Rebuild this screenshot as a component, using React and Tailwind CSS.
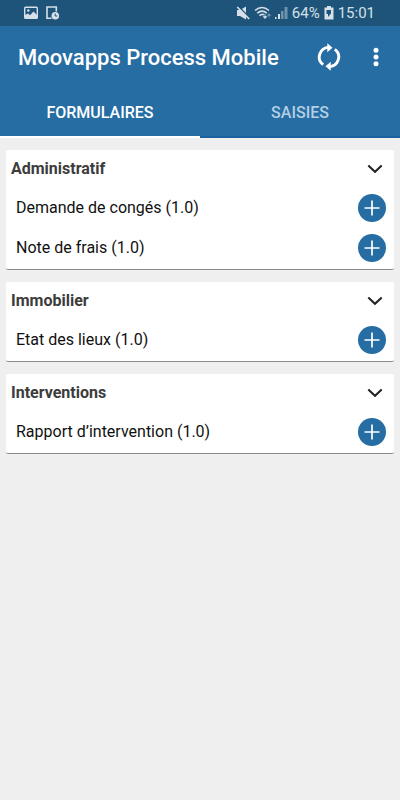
import {useState} from "react";

const groups = [
    {name: "Administratif", forms: ["Demande de congés (1.0)", "Note de frais (1.0)"]},
    {name: "Immobilier", forms: ["Etat des lieux (1.0)"]},
    {name: "Interventions", forms: ["Rapport d’intervention (1.0)"]},
];

function StatusBar() {
    return (
        <div className="flex h-[26px] items-center justify-between bg-[#1e547a] pl-6 pr-[25px] text-[#d5e0e8]">
            <div className="flex items-center gap-2">
                <svg width="14" height="14" viewBox="0 0 14 14">
                    <rect x="0.7" y="1.2" width="12.6" height="11.2" rx="0.8" fill="none" stroke="currentColor" strokeWidth="1.4"/>
                    <circle cx="4.3" cy="4.5" r="1.2" fill="currentColor"/>
                    <path d="M1 12V9l3-1.5 2 1.8L9.5 5.5 13 9v3z" fill="currentColor"/>
                </svg>
                <svg width="14" height="14" viewBox="0 0 14 14">
                    <path d="M5.5 12.3H1V1h9.3v4.5" fill="none" stroke="currentColor" strokeWidth="1.6"/>
                    <circle cx="9.3" cy="9.8" r="3.8" fill="currentColor"/>
                    <path d="M9.2 7.6V10h2.2" fill="none" stroke="#1e547a" strokeWidth="1"/>
                </svg>
            </div>
            <div className="flex items-center gap-1">
                <svg width="14" height="14" viewBox="0 0 14 14">
                    <path d="M1 4h3L10 0.5v13L4 10H1z" fill="currentColor"/>
                    <path d="M2.6 0.4l11 11.6" stroke="#1e547a" strokeWidth="1.5"/>
                    <path d="M1.2 1l12 12" stroke="currentColor" strokeWidth="1.7"/>
                </svg>
                <div className="flex items-center gap-0.5">
                    <svg width="18" height="14" viewBox="0 0 18 14">
                        <path d="M1 4.5Q8 -1.5 15 4.5M3.2 7.2Q8 3 12.8 7.2M5.4 9.7Q8 7.4 10 9" fill="none" stroke="currentColor" strokeWidth="1.6"/>
                        <path d="M11 8v4M9.3 10.6L11 12.6l1.7-2z" fill="currentColor" stroke="currentColor" strokeWidth="0.8"/>
                        <path d="M13.4 9.4L15 7.5l1.6 1.9zM15 9v2.5" fill="currentColor" stroke="currentColor" strokeWidth="0.8" opacity="0.45"/>
                    </svg>
                    <svg width="14" height="14" viewBox="0 0 14 14" fill="currentColor">
                        <path d="M1 11h1.5v2H1zM4 8h2v5H4z"/>
                        <path d="M7 5h2.500v8H7zM10.500 1h3v12h-3z" opacity="0.45"/>
                    </svg>
                </div>
                <span className="text-[15px]">64%</span>
                <svg width="10" height="14" viewBox="0 0 10 14">
                    <path d="M3 0h4v1.5h2.5v12h-9v-12H3z" fill="currentColor"/>
                    <path d="M2.5 4h4.500v3.500L4 11V8H2.500z" fill="#1e547a"/>
                </svg>
                <span className="text-[15px]">15:01</span>
            </div>
        </div>
    );
}

function RefreshIcon() {
    return (
        <svg width="24" height="28" viewBox="0 0 24 28">
            <path d="M6.2 21.7A9.6 9.6 0 0 1 12 4.4M17.8 6.3A9.6 9.6 0 0 1 12 23.6" fill="none" stroke="currentColor" strokeWidth="2.9"/>
            <path d="M10.3 0.3l5.2 4.5-5.2 4.5zM13.7 27.7l-5.2-4.5 5.2-4.5z" fill="currentColor"/>
        </svg>
    );
}

function FormGroup({group}) {
    const [open, setOpen] = useState(true);

    return (
        <section className="rounded-[2px] border-b border-[#8c8c8c] bg-white pb-px">
            <h2>
                <button
                    type="button"
                    aria-expanded={open}
                    onClick={() => setOpen(!open)}
                    className="flex h-[38px] w-full cursor-pointer items-center justify-between pl-[5px] pr-[11px] text-base font-bold text-[#3c3c3c]"
                >
                    {group.name}
                    <svg width="16" height="10" viewBox="0 0 16 10" className={open ? "" : "rotate-180"}>
                        <path d="M1.3 1.5L8 7.8l6.7-6.3" fill="none" stroke="#222222" strokeWidth="2"/>
                    </svg>
                </button>
            </h2>
            {open && <ul>
                {group.forms.map((form) => (
                    <li key={form} className="flex h-10 items-center justify-between pl-[10px] pr-2 text-base text-[#111111]">
                        {form}
                        <button type="button" aria-label={`Ajouter ${form}`} className="cursor-pointer rounded-full">
                            <svg width="28" height="28" viewBox="0 0 28 28">
                                <circle cx="14" cy="14" r="14" fill="#266da3"/>
                                <path d="M14 6.5v15M6.5 14h15" stroke="white" strokeWidth="1.7"/>
                            </svg>
                        </button>
                    </li>
                ))}
            </ul>}
        </section>
    );
}

export default function App() {
    const [tab, setTab] = useState("formulaires");

    function tabClass(name) {
        return `flex-1 cursor-pointer border-b-2 pt-[2px] text-base font-medium ${tab === name ? "border-white text-white" : "border-[#1a62a0] text-[#b4cfe3]"}`;
    }

    return (
        <div className="min-h-screen bg-[#efefef] font-[Roboto,sans-serif]">
            <StatusBar/>
            <header className="bg-[#266da3] text-white">
                <div className="flex h-[62px] items-center pl-[18px] pr-[21px]">
                    <h1 className="flex-1 text-[22px] font-medium">Moovapps Process Mobile</h1>
                    <button type="button" aria-label="Actualiser" className="mr-8 cursor-pointer">
                        <RefreshIcon/>
                    </button>
                    <button type="button" aria-label="Menu" className="cursor-pointer">
                        <svg width="6" height="20" viewBox="0 0 6 20" fill="currentColor">
                            <circle cx="3" cy="3.3" r="2.5"/>
                            <circle cx="3" cy="10" r="2.5"/>
                            <circle cx="3" cy="16.7" r="2.5"/>
                        </svg>
                    </button>
                </div>
                <nav className="flex h-[50px]">
                    <button type="button" onClick={() => setTab("formulaires")} className={tabClass("formulaires")}>
                        FORMULAIRES
                    </button>
                    <button type="button" onClick={() => setTab("saisies")} className={tabClass("saisies")}>
                        SAISIES
                    </button>
                </nav>
            </header>
            <main className="flex flex-col gap-3 px-[6px] pt-3">
                {groups.map((group) => <FormGroup key={group.name} group={group}/>)}
            </main>
        </div>
    );
}
